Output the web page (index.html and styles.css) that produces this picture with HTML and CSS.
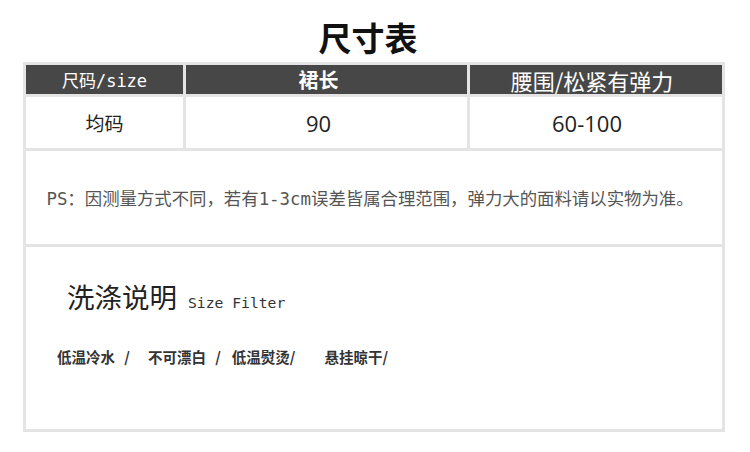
FILE: index.html
```html
<!DOCTYPE html>
<html lang="zh-CN">
<head>
<meta charset="utf-8">
<title>尺寸表</title>
<link rel="stylesheet" href="styles.css">
</head>
<body>
<div class="page">
  <h1 class="title">尺寸表</h1>
  <div class="table">
    <div class="cell head c1 mono">尺码/size</div>
    <div class="cell head c2 bold">裙长</div>
    <div class="cell head c3">腰围/松紧有弹力</div>
    <div class="cell data c1 cjk">均码</div>
    <div class="cell data c2">90</div>
    <div class="cell data c3">60-100</div>
    <div class="note">PS：因测量方式不同，若有1-3cm误差皆属合理范围，弹力大的面料请以实物为准。</div>
    <div class="wash">
      <div class="wash-title"><span class="wash-cn">洗涤说明</span><span class="wash-en">Size Filter</span></div>
      <div class="wash-items">
        <span class="item i1">低温冷水 /</span>
        <span class="item i2">不可漂白 /</span>
        <span class="item i3">低温熨烫/</span>
        <span class="item i4">悬挂晾干/</span>
      </div>
    </div>
  </div>
</div>
</body>
</html>
```

FILE: styles.css
```css
* { box-sizing: border-box; }
html, body { margin: 0; padding: 0; background: #fff; }
body { font-family: "Noto Sans CJK SC", "Noto Sans", sans-serif; color: #333; }
.page { width: 750px; height: 452px; }
.title {
  margin: 0;
  padding: 17px 14px 0 0;
  height: 62px;
  font-size: 33px;
  line-height: 40px;
  font-weight: 700;
  color: #111;
  text-align: center;
}
.table {
  margin-left: 23px;
  width: 702px;
  background: #e4e4e4;
  padding: 3px;
  display: grid;
  grid-template-columns: 157px 281px 252px;
  grid-template-rows: 29px 51px 93px 182px;
  gap: 3px;
}
.cell {
  display: flex;
  align-items: center;
  justify-content: center;
  white-space: nowrap;
}
.head { background: #474747; color: #fff; }
.head.c1 { font-size: 17px; }
.mono { font-family: "DejaVu Sans Mono", "Noto Sans CJK SC", monospace; }
.head.c2 { font-size: 20px; }
.head.c3 { font-size: 22px; padding-right: 8px; }
.bold { font-weight: 700; }
.data { background: #fff; color: #222; font-family: "Open Sans", "Noto Sans CJK SC", sans-serif; font-size: 22px; }
.data.cjk { font-family: "Noto Sans CJK SC", sans-serif; font-size: 19px; }
.c2 { padding-right: 16px; }
.data.c3 { padding-right: 18px; }
.note {
  grid-column: 1 / -1;
  background: #fff;
  display: flex;
  align-items: center;
  justify-content: center;
  padding-right: 8px;
  font-family: "DejaVu Sans Mono", "Noto Sans CJK SC", monospace;
  font-size: 17.4px;
  color: #555;
  white-space: nowrap;
}
.wash {
  grid-column: 1 / -1;
  background: #fff;
  padding: 36px 0 0 41px;
}
.wash-title { display: flex; align-items: baseline; line-height: 1; }
.wash-cn { font-size: 27.5px; color: #222; }
.wash-en { font-family: "DejaVu Sans Mono", monospace; font-size: 14.7px; margin-left: 11px; color: #333; }
.wash-items {
  margin: 36px 0 0 -10px;
  display: flex;
  font-size: 14.5px;
  line-height: 20px;
  font-weight: 700;
  color: #333;
  white-space: nowrap;
  word-spacing: 6px;
}
.i2 { margin-left: 18px; }
.i3 { margin-left: 11px; }
.i4 { margin-left: 29px; }
```
